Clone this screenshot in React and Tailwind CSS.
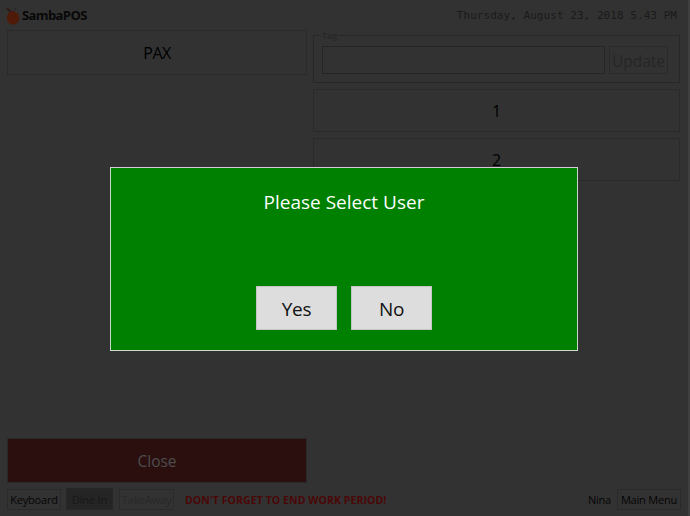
const sans = "font-['Open_Sans','Noto_Sans',sans-serif]";

function Apple() {
  return (
    <svg width="16" height="20" viewBox="0 0 16 20" className="shrink-0">
      <path d="M1 2 C3 1.5 5 3 6.5 6 L5 6.5 C3.5 5.5 2 4 1 2 Z" fill="#2e1a14" />
      <path d="M7 6 C9 5 10 3.5 10.5 2" stroke="#2a2220" strokeWidth="1" fill="none" />
      <ellipse cx="8" cy="12" rx="6.2" ry="6.8" fill="#4f1a08" />
    </svg>
  );
}

export default function App() {
  return (
    <div className={`relative w-[690px] h-[516px] overflow-hidden bg-[#323232] ${sans}`}>
      <div className="flex flex-col h-full border-r-2 border-[#3f3f3f] w-[690px]">
        <header className="h-[30px] flex items-center justify-between pl-[5px] pr-[11px] shrink-0">
          <div className="flex items-center gap-[1px] pt-[2px]">
            <Apple />
            <span className="text-[13px] font-bold tracking-[-0.6px] text-[#080808]">SambaPOS</span>
          </div>
          <span className="font-['DejaVu_Sans_Mono',monospace] text-[11px] tracking-[0.05px] text-[#1a1a1a] pt-[3px]">
            Thursday, August 23, 2018 5.43 PM
          </span>
        </header>

        <main className="flex-1 flex gap-[6px] pl-[7px] pr-[8px] min-h-0">
          <section className="w-[300px] flex flex-col">
            <div className="h-[45px] border border-[#2a2a2a] flex items-center justify-center text-[16px] tracking-[-0.5px] pt-[1px] text-[#000000]">
              PAX
            </div>
            <div className="flex-1" />
            <div className="h-[45px] mb-[5px] pt-[2px] bg-[#2b0f0f] border border-[#292929] flex items-center justify-center text-[15.5px] text-[#4d4d4d]">
              Close
            </div>
          </section>

          <section className="flex-1 flex flex-col gap-[6px] pt-[5px]">
            <fieldset className="relative h-[48px] border border-[#272727] pl-[8px] pr-[11px] pt-[10px] flex gap-[4px]">
              <legend className="absolute left-[7px] -top-[6px] bg-[#323232] px-[1px] text-[9px] leading-[11px] font-semibold text-[#262626]">
                Tag
              </legend>
              <div className="flex w-full gap-[4px] h-[28px]">
                <div className="flex-1 border border-[#262626]" />
                <div className="w-[59px] border border-[#2a2a2a] flex items-center justify-center pt-[3px] text-[15.5px] text-[#262626]">
                  Update
                </div>
              </div>
            </fieldset>
            <div className="h-[43px] border border-[#2a2a2a] flex items-center justify-center text-[16px] leading-[24px] pt-[1px] text-[#000000]">
              1
            </div>
            <div className="h-[43px] border border-[#2a2a2a] flex items-center justify-center text-[16px] leading-[24px] pt-[1px] text-[#000000]">
              2
            </div>
          </section>
        </main>

        <footer className="h-[28px] shrink-0 flex items-center pl-[7px] pr-[7px] pb-[6px] text-[11px] tracking-[-0.2px]">
          <div className="h-[21px] w-[54px] pt-[2px] border border-[#2a2a2a] flex items-center justify-center text-[#050505]">
            Keyboard
          </div>
          <div className="h-[22px] w-[47px] pt-[2px] ml-[5px] bg-[#252525] border border-[#272727] flex items-center justify-center text-[#171717]">
            Dine In
          </div>
          <div className="h-[21px] w-[55px] pt-[2px] ml-[6px] border border-[#2a2a2a] flex items-center justify-center text-[#282828]">
            TakeAway
          </div>
          <span className="ml-[11px] pt-[3px] text-[10.5px] font-bold tracking-[0.08px] text-[#4b0707]">
            DON'T FORGET TO END WORK PERIOD!
          </span>
          <span className="ml-auto pt-[2px] text-[#050505]">Nina</span>
          <div className="h-[21px] w-[64px] pt-[2px] ml-[6px] border border-[#2a2a2a] flex items-center justify-center text-[#050505]">
            Main Menu
          </div>
        </footer>
      </div>

      <div className="absolute left-[110px] top-[167px] w-[468px] h-[184px] bg-[#008000] border border-[#c9d9c9] border-t-[#d9c9d9] flex flex-col items-center pt-[21px]">
        <div className="text-[19px] leading-[26px] text-white">Please Select User</div>
        <div className="flex gap-[14px] mt-[71px]">
          <button className="w-[81px] h-[44px] pt-[2px] bg-[#dddddd] border border-[#c4c4c4] text-[19px] tracking-[-0.3px] text-[#111111]">Yes</button>
          <button className="w-[81px] h-[44px] pt-[2px] bg-[#dddddd] border border-[#c4c4c4] text-[19px] tracking-[-0.3px] text-[#111111]">No</button>
        </div>
      </div>
    </div>
  );
}
